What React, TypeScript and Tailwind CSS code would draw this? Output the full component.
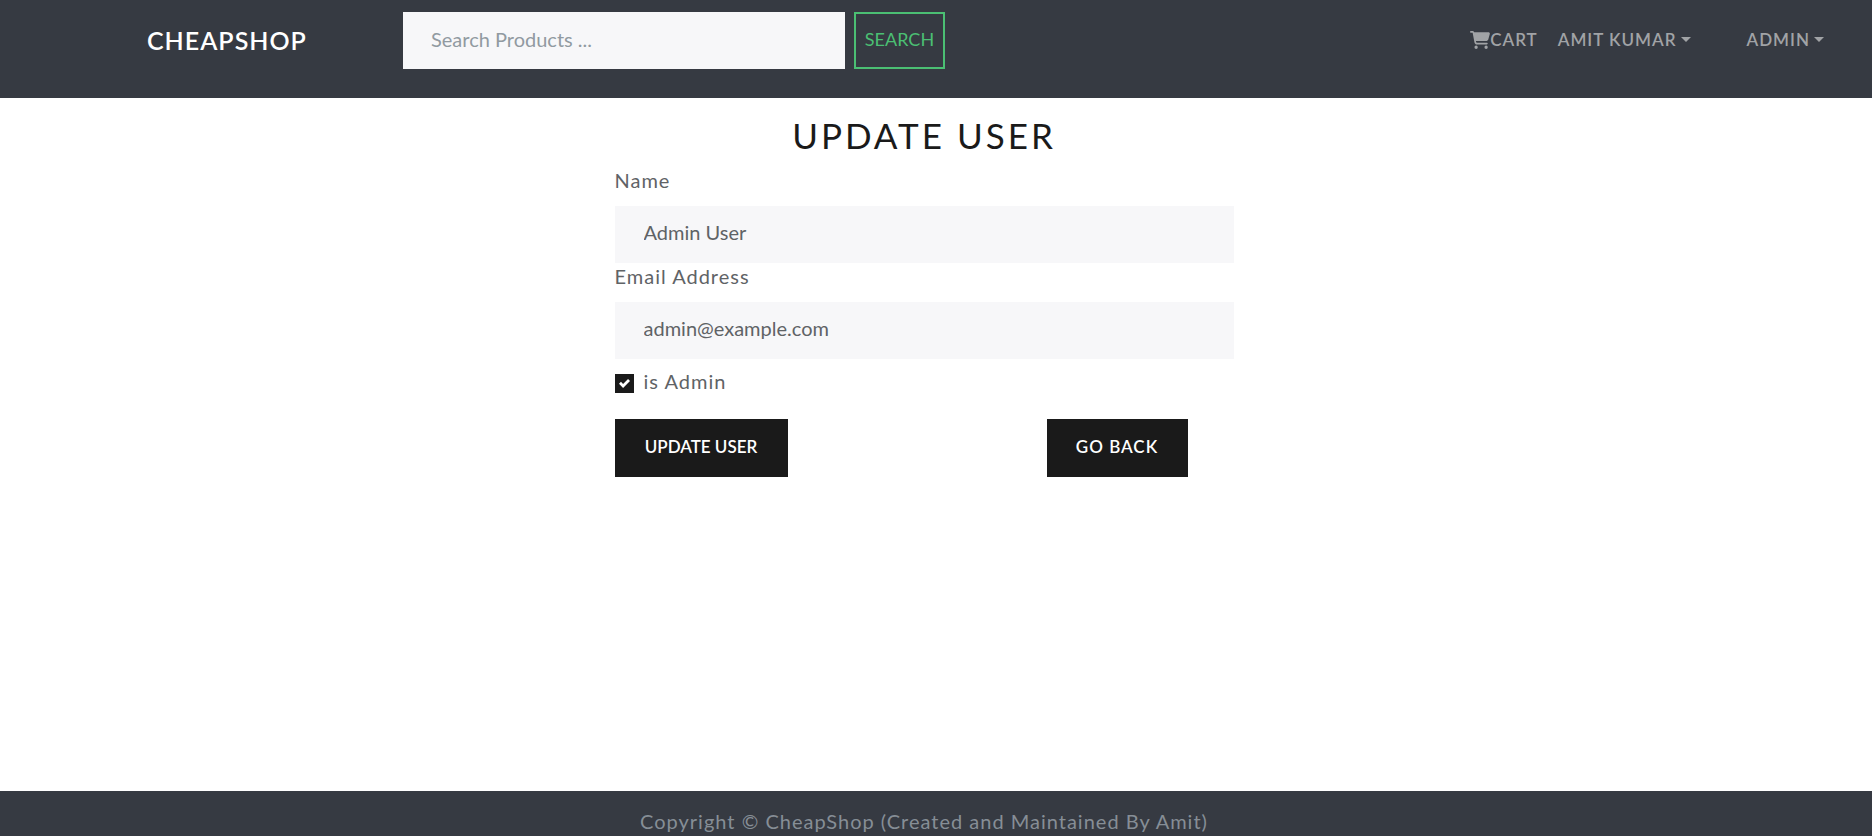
import { useState } from "react";
import type { FormEvent, InputHTMLAttributes } from "react";

function CartIcon() {
  return (
    <svg viewBox="0 0 576 512" className="h-[18px] w-5" fill="currentColor" aria-hidden="true">
      <path d="M0 24C0 10.700 10.700 0 24 0H69.500c22 0 41.500 12.800 50.600 32h411c26.300 0 45.500 25 38.600 50.400l-41 152.300c-8.500 31.400-37 53.300-69.500 53.300H170.700l5.400 28.500c2.200 11.300 12.100 19.500 23.600 19.500H488c13.300 0 24 10.700 24 24s-10.700 24-24 24H199.700c-34.600 0-64.300-24.600-70.700-58.500L77.400 54.500c-.7-3.800-4-6.500-7.900-6.500H24C10.700 48 0 37.300 0 24zM128 464a48 48 0 1 1 96 0 48 48 0 1 1-96 0zm336-48a48 48 0 1 1 0 96 48 48 0 1 1 0-96z" />
    </svg>
  );
}

function Menu({ label }: { label: string }) {
  return (
    <button type="button" className="flex items-center gap-1 tracking-[1px] uppercase">
      {label}
      <svg viewBox="0 0 10 5" className="h-[5px] w-2.5" fill="currentColor" aria-hidden="true">
        <path d="M0 0h10L5 5z" />
      </svg>
    </button>
  );
}

function Header() {
  return (
    <header className="flex h-[98px] items-start bg-[#363a42] pt-3 pr-12 pl-[147px] font-semibold">
      <a href="#home" className="w-64 shrink-0 text-[25px] leading-[57px] tracking-[1px] text-white">
        CHEAPSHOP
      </a>
      <form className="flex gap-[9px]" onSubmit={(e: FormEvent) => e.preventDefault()}>
        <input
          type="text"
          aria-label="Search products"
          placeholder="Search Products ..."
          className="h-[57px] w-[442px] bg-[#f7f7f9] px-7 pb-1 text-[20px] font-normal text-[#55595c] outline-none placeholder:text-[#919aa1]"
        />
        <button
          type="submit"
          className="h-[57px] w-[91px] border-2 border-[#4bbf73] pb-1 text-lg font-normal text-[#4bbf73]"
        >
          SEARCH
        </button>
      </form>
      <nav className="ml-auto flex h-[57px] items-center pb-0.5 text-[17px] text-[#a1a3a6]">
        <a href="#cart" className="mr-5 flex items-center tracking-[1px]">
          <CartIcon />
          CART
        </a>
        <Menu label="Amit Kumar" />
        <div className="ml-14">
          <Menu label="Admin" />
        </div>
      </nav>
    </header>
  );
}

function Field({ id, label, ...rest }: { id: string; label: string } & InputHTMLAttributes<HTMLInputElement>) {
  return (
    <div>
      <label htmlFor={id} className="block h-[39px] text-[20px] leading-[26px] tracking-[1px]">
        {label}
      </label>
      <input
        id={id}
        className="block h-[57px] w-full bg-[#f7f7f9] px-[29px] pb-1.5 text-[20px] outline-none"
        {...rest}
      />
    </div>
  );
}

export default function App() {
  const [name, setName] = useState("Admin User");
  const [email, setEmail] = useState("admin@example.com");
  const [isAdmin, setIsAdmin] = useState(true);

  return (
    <div className="flex min-h-screen flex-col bg-white font-['Lato',sans-serif] text-[#5f6366]">
      <Header />
      <main className="flex grow justify-center pt-4 pr-6">
        <form className="w-full max-w-[619px]" onSubmit={(e: FormEvent) => e.preventDefault()}>
          <h1 className="h-[53px] text-center text-[35px] leading-[42px] font-normal tracking-[3px] text-[#1a1a1a]">
            UPDATE USER
          </h1>
          <Field id="name" label="Name" type="text" value={name} onChange={(e) => setName(e.target.value)} />
          <Field
            id="email"
            label="Email Address"
            type="email"
            value={email}
            onChange={(e) => setEmail(e.target.value)}
          />
          <div className="mt-2.5 flex h-7 items-center gap-2.5">
            <span className="grid size-[19px] place-items-center">
              <input
                id="is-admin"
                type="checkbox"
                checked={isAdmin}
                onChange={(e) => setIsAdmin(e.target.checked)}
                className="peer col-start-1 row-start-1 size-[19px] appearance-none border border-[#1a1a1a] checked:bg-[#1a1a1a]"
              />
              <svg
                viewBox="0 0 8 8"
                className="pointer-events-none invisible col-start-1 row-start-1 size-[11px] peer-checked:visible"
                fill="#fff"
                aria-hidden="true"
              >
                <path d="M6.564.75l-3.590 3.612-1.538-1.550L0 4.260l2.974 2.990L8 2.193z" />
              </svg>
            </span>
            <label htmlFor="is-admin" className="pb-1 text-[20px] leading-[26px] tracking-[1px]">
              is Admin
            </label>
          </div>
          <div className="mt-[22px] flex justify-between pr-[46px] text-[17px] font-semibold text-white">
            <button type="submit" className="h-[58px] w-[173px] bg-[#1a1a1a] pb-0.5">
              UPDATE USER
            </button>
            <a
              href="#users"
              className="flex h-[58px] w-[141px] items-center justify-center bg-[#1a1a1a] pb-0.5 tracking-[1px]"
            >
              GO BACK
            </a>
          </div>
        </form>
      </main>
      <footer className="bg-[#363a42] pt-4 pr-6 text-center text-[20px] leading-[29px] tracking-[1px] text-[#868e96]">
        Copyright © CheapShop (Created and Maintained By Amit)
      </footer>
    </div>
  );
}
